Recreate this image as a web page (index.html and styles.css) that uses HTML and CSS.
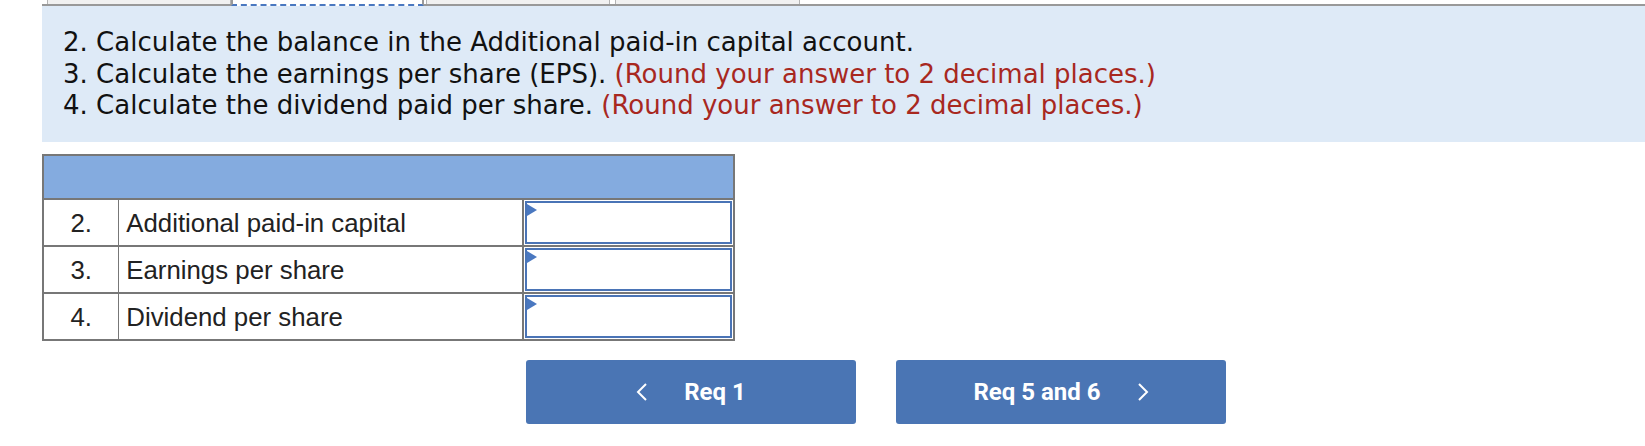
FILE: index.html
```html
<!DOCTYPE html>
<html lang="en">
<head>
<meta charset="utf-8">
<title>Requirements 2-4</title>
<link rel="stylesheet" href="styles.css">
</head>
<body>
<div class="page">
  <div class="tabs">
    <div class="tab tab-1"></div>
    <div class="tab tab-active"></div>
    <div class="tab tab-3"></div>
    <div class="tab tab-4"></div>
  </div>

  <div class="instructions">
    <p>2. Calculate the balance in the Additional paid-in capital account.</p>
    <p>3. Calculate the earnings per share (EPS). <span class="hint">(Round your answer to 2 decimal places.)</span></p>
    <p>4. Calculate the dividend paid per share. <span class="hint">(Round your answer to 2 decimal places.)</span></p>
  </div>

  <table class="answers">
    <colgroup>
      <col class="c-num">
      <col class="c-label">
      <col class="c-input">
    </colgroup>
    <thead>
      <tr class="head"><th colspan="3"></th></tr>
    </thead>
    <tbody>
      <tr>
        <td class="num">2.</td>
        <td class="label">Additional paid-in capital</td>
        <td class="inp"><div class="box"><span class="flag"></span></div></td>
      </tr>
      <tr>
        <td class="num">3.</td>
        <td class="label">Earnings per share</td>
        <td class="inp"><div class="box"><span class="flag"></span></div></td>
      </tr>
      <tr>
        <td class="num">4.</td>
        <td class="label">Dividend per share</td>
        <td class="inp"><div class="box"><span class="flag"></span></div></td>
      </tr>
    </tbody>
  </table>

  <div class="nav">
    <button class="btn" type="button">
      <svg class="chev" width="12" height="20" viewBox="0 0 12 20"><polyline points="10,2 2,10 10,18" fill="none" stroke="#fff" stroke-width="2"/></svg>
      <span>Req 1</span>
    </button>
    <button class="btn" type="button">
      <span>Req 5 and 6</span>
      <svg class="chev" width="12" height="20" viewBox="0 0 12 20"><polyline points="2,2 10,10 2,18" fill="none" stroke="#fff" stroke-width="2"/></svg>
    </button>
  </div>
</div>
</body>
</html>
```

FILE: styles.css
```css
* { box-sizing: border-box; }

html, body {
  margin: 0;
  padding: 0;
  background: #ffffff;
}

.page {
  width: 1645px;
  height: 446px;
  overflow: hidden;
}

/* top tab strip */
.tabs {
  display: flex;
  margin-left: 42px;
  height: 6px;
  border-bottom: 2px solid #999999;
  align-items: flex-start;
}

.tab {
  height: 4px;
  background: #f1f1f1;
  border-left: 1px solid #b4b4b4;
  border-right: 1px solid #b4b4b4;
}

.tab-1 { margin-left: 5px; width: 184px; }
.tab-active {
  width: 193px;
  height: 6px;
  margin-bottom: -2px;
  background: #ffffff;
  border-left: 2px solid #9a9a9a;
  border-right: 2px solid #9a9a9a;
  border-bottom: 2px dashed #4a78c0;
}
.tab-3 { margin-left: 2px; width: 184px; }
.tab-4 { margin-left: 5px; width: 185px; }

/* instruction panel */
.instructions {
  margin-left: 42px;
  background: #deeaf7;
  padding: 21px 0 20px 21px;
  font-family: "DejaVu Sans", Verdana, sans-serif;
  font-size: 26px;
  line-height: 31.5px;
  color: #111111;
}

.instructions p {
  margin: 0;
  white-space: nowrap;
}

.hint {
  color: #a8281f;
}

/* answer table */
.answers {
  margin: 12px 0 0 42px;
  width: 693px;
  border-collapse: collapse;
  border: 2px solid #777777;
  font-family: "Liberation Sans", Arial, Helvetica, sans-serif;
  font-size: 25.8px;
  color: #222222;
}

.c-num { width: 76px; }
.c-label { width: 405px; }
.c-input { width: 212px; }

.head th {
  height: 44px;
  background: #84abdf;
  padding: 0;
  border-bottom: 2px solid #777777;
}

.answers td {
  height: 45px;
  padding: 3px 0 0 0;
  border-top: 2px solid #777777;
}

.num {
  text-align: center;
  border-right: 1px solid #777777;
}

.label {
  padding-left: 7px !important;
  border-right: 2px solid #777777;
}

.answers td.inp {
  padding: 1px;
  vertical-align: top;
}

.box {
  position: relative;
  height: 43px;
  border: 2px solid #4a74b6;
  background: #ffffff;
}

.flag {
  position: absolute;
  left: 0;
  top: 1px;
  width: 0;
  height: 0;
  border-left: 10px solid #4a78c0;
  border-top: 6px solid transparent;
  border-bottom: 6px solid transparent;
}

/* navigation buttons */
.nav {
  display: flex;
  gap: 40px;
  margin: 19px 0 0 526px;
}

.btn {
  width: 330px;
  height: 64px;
  border: none;
  border-radius: 3px;
  background: #4a75b4;
  color: #ffffff;
  font-family: Roboto, "Liberation Sans", Arial, sans-serif;
  font-weight: 700;
  font-size: 24px;
  display: flex;
  align-items: center;
  justify-content: center;
  gap: 36px;
  padding: 0;
}

.chev {
  display: block;
}
```
